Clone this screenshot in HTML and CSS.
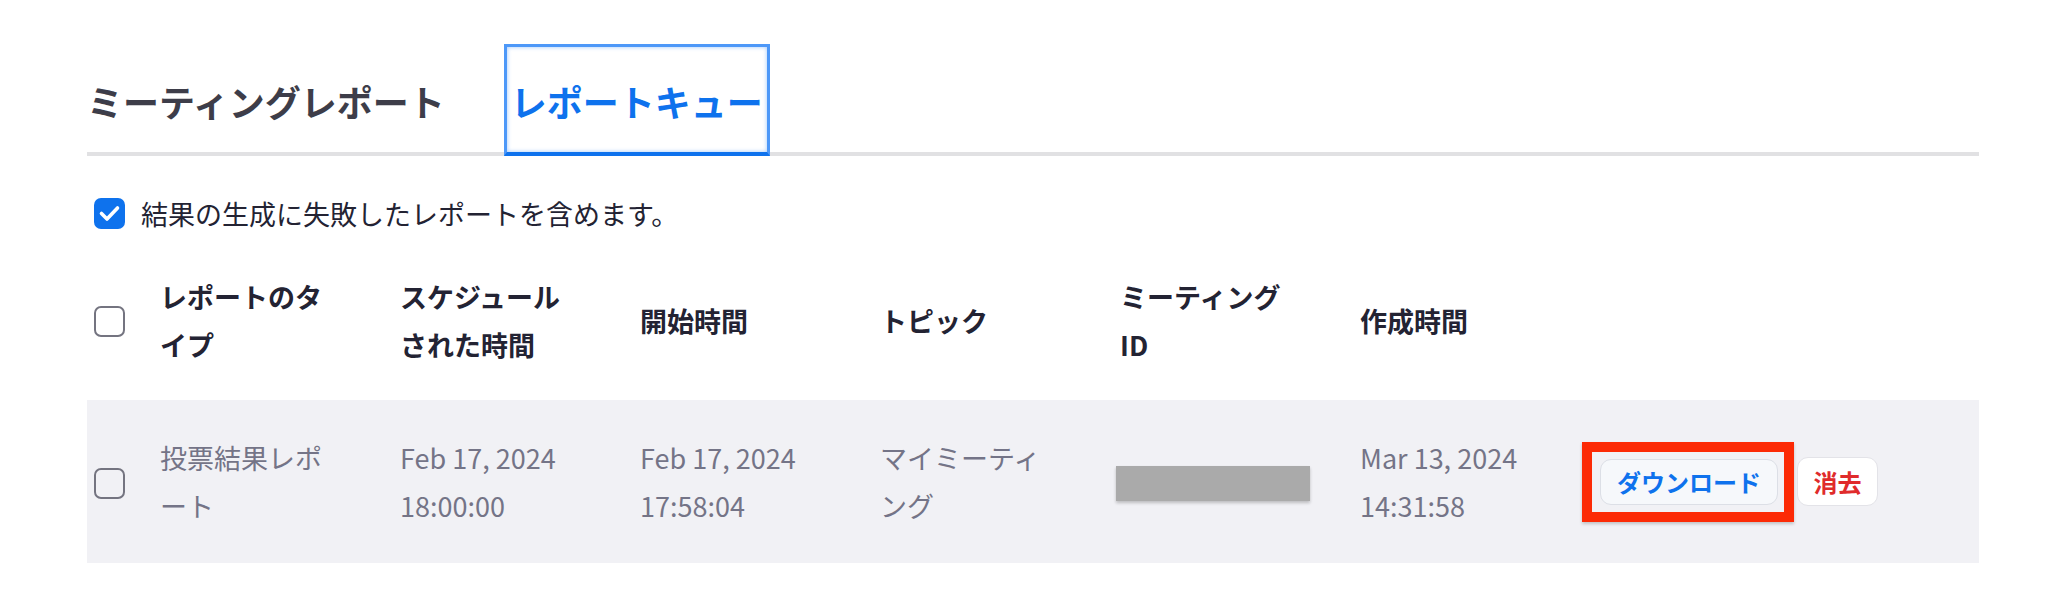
FILE: index.html
```html
<!DOCTYPE html>
<html lang="ja">
<head>
<meta charset="utf-8">
<title>レポートキュー</title>
<link rel="stylesheet" href="styles.css">
</head>
<body>
<div class="page">
  <div class="tabs">
    <div class="tab first">ミーティングレポート</div>
    <div class="tab active">レポートキュー</div>
  </div>

  <div class="filter">
    <span class="cb checked">
      <svg viewBox="0 0 31 31" width="31" height="31"><path d="M7.5 15.5l5.5 5.5 10.5-11" fill="none" stroke="#fff" stroke-width="3.6" stroke-linecap="round" stroke-linejoin="round"/></svg>
    </span>
    <span class="filter-label">結果の生成に失敗したレポートを含めます。</span>
  </div>

  <div class="table">
    <div class="row head">
      <div class="cell cb-cell"><span class="cb"></span></div>
      <div class="cell">レポートのタイプ</div>
      <div class="cell">スケジュールされた時間</div>
      <div class="cell">開始時間</div>
      <div class="cell">トピック</div>
      <div class="cell">ミーティングID</div>
      <div class="cell">作成時間</div>
      <div class="cell"></div>
    </div>
    <div class="row body">
      <div class="cell cb-cell"><span class="cb"></span></div>
      <div class="cell">投票結果レポート</div>
      <div class="cell">Feb 17, 2024 18:00:00</div>
      <div class="cell">Feb 17, 2024 17:58:04</div>
      <div class="cell">マイミーティング</div>
      <div class="cell"><span class="redacted"></span></div>
      <div class="cell">Mar 13, 2024 14:31:58</div>
      <div class="cell actions">
        <span class="highlight"><button class="btn download">ダウンロード</button></span>
        <button class="btn delete">消去</button>
      </div>
    </div>
  </div>
</div>
</body>
</html>
```

FILE: styles.css
```css
* { box-sizing: border-box; }

html, body {
  margin: 0;
  padding: 0;
  background: #ffffff;
}

body {
  font-family: "Noto Sans CJK JP", "Noto Sans", sans-serif;
  color: #232333;
}

.page {
  padding: 44px 85px 0 87px;
}

/* Tabs */
.tabs {
  display: flex;
  gap: 52px;
  border-bottom: 4px solid #e1e1e3;
}

.tab {
  font-size: 36px;
  font-weight: 700;
  line-height: 102px;
  padding: 3px 4px 0;
  border: 3px solid transparent;
  border-bottom: 4px solid transparent;
  margin-bottom: -4px;
  color: #3d3d49;
  white-space: nowrap;
}

.tab.first {
  padding-left: 0;
  border-left: 0;
}

.tab.active {
  color: #0e72ed;
  border-color: #4d98f8;
  border-bottom-color: #0e72ed;
  box-shadow: inset 0 0 4px rgba(77, 152, 248, 0.55);
}

/* Filter */
.filter {
  display: flex;
  align-items: center;
  gap: 16px;
  margin-top: 42px;
  height: 31px;
  padding-left: 7px;
}

.filter-label {
  font-size: 27px;
  line-height: 40px;
  color: #232333;
  white-space: nowrap;
}

.cb {
  display: inline-block;
  width: 31px;
  height: 31px;
  border: 2px solid #747480;
  border-radius: 7px;
  flex: none;
}

.cb.checked {
  background: #0e72ed;
  border: 0;
}

.cb svg { display: block; }

/* Table */
.table {
  margin-top: 13px;
}

.row {
  display: grid;
  grid-template-columns: 73px repeat(6, 240px) 1fr;
  align-items: center;
}

.row.head {
  height: 158px;
  font-weight: 700;
  color: #232333;
}

.row.body {
  height: 163px;
  background: #f1f1f5;
  color: #747487;
}

.cell {
  font-size: 27px;
  line-height: 48px;
  padding-right: 60px;
  line-break: normal;
  word-break: normal;
}

.cb-cell {
  padding-left: 7px;
  padding-right: 0;
  display: flex;
  align-items: center;
}

.row.body .cb-cell .cb {
  margin-top: 3px;
}

.redacted {
  display: block;
  width: 194px;
  height: 35px;
  margin-left: -4px;
  margin-top: 4px;
  background: #aaaaaa;
  box-shadow: 0 2px 3px rgba(0, 0, 0, 0.22);
}

.actions {
  padding-right: 0;
  display: flex;
  align-items: center;
  gap: 19px;
}

.highlight {
  position: relative;
  display: inline-flex;
}

.highlight::after {
  content: "";
  position: absolute;
  top: -17px;
  left: -18px;
  right: -16px;
  bottom: -17px;
  border: 10px solid #fc2a05;
  box-shadow: 0 2px 3px rgba(0, 0, 0, 0.2);
  pointer-events: none;
}

.btn {
  font-family: "Noto Sans CJK JP", "Noto Sans", sans-serif;
  font-size: 24px;
  font-weight: 700;
  line-height: 1;
  border-radius: 11px;
  cursor: pointer;
  margin: 0;
}

.btn.download {
  height: 46px;
  padding: 0 16px;
  background: #f6f8fb;
  border: 1px solid #dcdfe6;
  color: #0e72ed;
}

.btn.delete {
  height: 49px;
  padding: 0 15.5px;
  background: #ffffff;
  border: 1px solid #e3e3e8;
  color: #e02b2b;
}
```
